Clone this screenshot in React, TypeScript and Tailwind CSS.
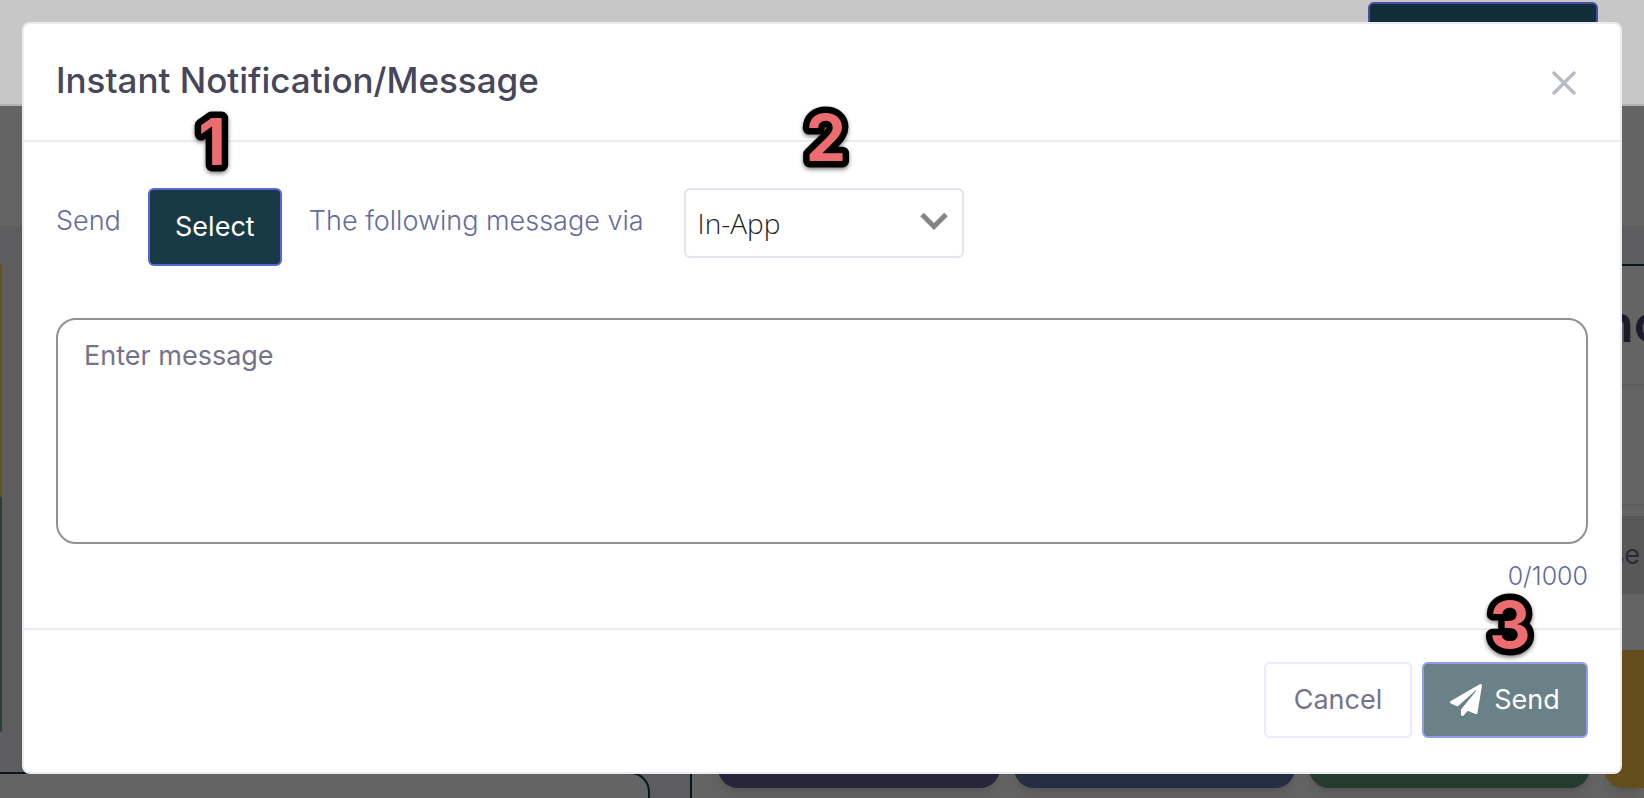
import { useState } from 'react';
import type { ReactNode } from 'react';
import clsx from 'clsx';
import { FaPaperPlane } from 'react-icons/fa';

const MAX_LENGTH = 1000;

const cards = [
  { name: 'purple', color: 'bg-[#292539]' },
  { name: 'blue', color: 'bg-[#252d42]' },
  { name: 'green', color: 'bg-[#253b2f]' },
];

function StepMarker({ value, className }: { value: string; className: string }) {
  return (
    <svg
      className={clsx('pointer-events-none absolute drop-shadow-[0_2px_2px_rgba(0,0,0,0.5)]', className)}
      width="60"
      height="80"
      viewBox="0 0 60 80"
      aria-hidden="true"
    >
      <text
        x="30"
        y="59"
        textAnchor="middle"
        className="fill-[#ed6c70] stroke-black font-['Inter',sans-serif] text-[64px] font-bold [paint-order:stroke]"
        strokeWidth="13"
        strokeLinejoin="round"
      >
        {value}
      </text>
    </svg>
  );
}

function Field({ children, className }: { children: ReactNode; className?: string }) {
  return <div className={clsx('relative', className)}>{children}</div>;
}

function Backdrop() {
  return (
    <div className="flex h-full flex-col" aria-hidden="true">
      <div className="flex h-[106px] shrink-0 justify-end border-b-2 border-[#b1b1b5] bg-[#c7c7c7] pt-[2px] pr-[46px]">
        <div className="h-20 w-[230px] rounded-md border-2 border-[#444ca5] bg-[#122d37]" />
      </div>
      <div className="h-[120px] shrink-0 bg-[#646464]" />
      <div className="flex flex-1 bg-[#5d5d60] pt-[38px]">
        {/* Left column */}
        <div className="flex w-[42%] flex-col pr-10">
          <div className="h-[233px] w-[2px] bg-[#65501f]" />
          <div className="h-[235px] w-[2px] bg-[#274034]" />
          <div className="mt-10 flex-1 rounded-tr-[20px] border-t-2 border-r-2 border-[#09171d] bg-[#646464]" />
        </div>
        {/* Right column */}
        <div className="flex flex-1 flex-col border-t-2 border-l-2 border-[#09171d] bg-[#646464]">
          <div className="flex h-[120px] justify-end overflow-hidden border-b-2 border-[#5c5c5c] pt-[30px]">
            <span className="w-[42px] text-[52px] leading-[56px] font-semibold text-[#1d1b28]">nc</span>
          </div>
          <div className="h-[120px] border-b-2 border-[#5c5c5c]" />
          <div className="mt-[10px] flex h-[78px] items-center justify-end bg-[#585858] pr-1 text-[27px] text-[#2b2a34]">
            se
          </div>
          <div className="mt-14 flex h-[138px] gap-[14px] pl-[26px]">
            {cards.map((card) => (
              <div key={card.name} className={clsx('flex-1 rounded-[20px] shadow-lg', card.color)} />
            ))}
            <div className="w-10 rounded-bl-[20px] bg-[#634d1c] shadow-lg" />
          </div>
        </div>
      </div>
    </div>
  );
}

export default function App() {
  const [message, setMessage] = useState('');
  const [channel, setChannel] = useState('In-App');

  return (
    <div className="relative h-screen overflow-hidden bg-[#646464] font-['Inter',sans-serif]">
      <Backdrop />

      <div className="absolute inset-x-0 top-0 p-[22px]">
        <div
          role="dialog"
          aria-labelledby="dialog-title"
          className="rounded-lg border-2 border-[#ebebf2] bg-white text-[27px] leading-10 font-light text-[#646c9a]"
        >
          <header className="flex h-[118px] items-center justify-between border-b-2 border-[#ebebf2] pr-[43px] pl-8">
            <h1 id="dialog-title" className="pb-1 text-[35px] font-medium text-[#48465b]">
              Instant Notification/Message
            </h1>
            <button type="button" aria-label="Close" className="text-[#b9bbc6]">
              <svg width="26" height="26" viewBox="0 0 26 26" fill="none" stroke="currentColor" strokeWidth="3.5" strokeLinecap="round">
                <path d="M3 4l20 20M23 4L3 24" />
              </svg>
            </button>
          </header>

          <div className="px-8 pt-[46px] pb-8">
            <div className="flex items-start">
              <span className="pt-[13px]">Send</span>
              <Field className="ml-[27px]">
                <button
                  type="button"
                  className="h-[78px] w-[134px] rounded-md border-2 border-[#5867dd] bg-[#183a46] font-normal text-white"
                >
                  Select
                </button>
                <StepMarker value="1" className="-top-[82px] left-[34px]" />
              </Field>
              <label htmlFor="channel" className="pt-[13px] pl-[27px]">
                The following message via
              </label>
              <Field className="ml-10">
                <select
                  id="channel"
                  value={channel}
                  onChange={(e) => setChannel(e.target.value)}
                  className="h-[70px] w-[280px] appearance-none rounded-md border-2 border-[#e2e5ec] bg-white pl-3 font-['Open_Sans',sans-serif] text-[28px] font-light text-[#222222]"
                >
                  <option>In-App</option>
                </select>
                <svg className="pointer-events-none absolute top-6 right-4" width="28" height="18" viewBox="0 0 28 18" fill="none" stroke="#858585" strokeWidth="5">
                  <path d="M2 2.5l12 12 12-12" />
                </svg>
                <StepMarker value="2" className="-top-[86px] left-[112px]" />
              </Field>
            </div>

            <textarea
              aria-label="Message"
              placeholder="Enter message"
              maxLength={MAX_LENGTH}
              value={message}
              onChange={(e) => setMessage(e.target.value)}
              className="mt-[52px] block h-[226px] w-full resize-none rounded-[20px] border-2 border-[#919191] px-[26px] py-4 font-normal text-[#48465b] placeholder:text-[#74738a]"
            />
            <p className="mt-3 text-right text-[25px]">
              {message.length}/{MAX_LENGTH}
            </p>
          </div>

          <footer className="flex justify-end gap-[10px] border-t-2 border-[#ebebf2] px-8 pt-8 pb-[34px]">
            <button type="button" className="h-[76px] w-[148px] rounded-md border-2 border-[#e9ebfa] font-normal text-[#74738a]">
              Cancel
            </button>
            <Field>
              <button
                type="button"
                className="flex h-[76px] w-[166px] items-center justify-center gap-3 rounded-md border-2 border-[#949de8] bg-[#698187] font-normal text-white"
              >
                <FaPaperPlane size={32} />
                Send
              </button>
              <StepMarker value="3" className="-top-[73px] left-[58px]" />
            </Field>
          </footer>
        </div>
      </div>
    </div>
  );
}
